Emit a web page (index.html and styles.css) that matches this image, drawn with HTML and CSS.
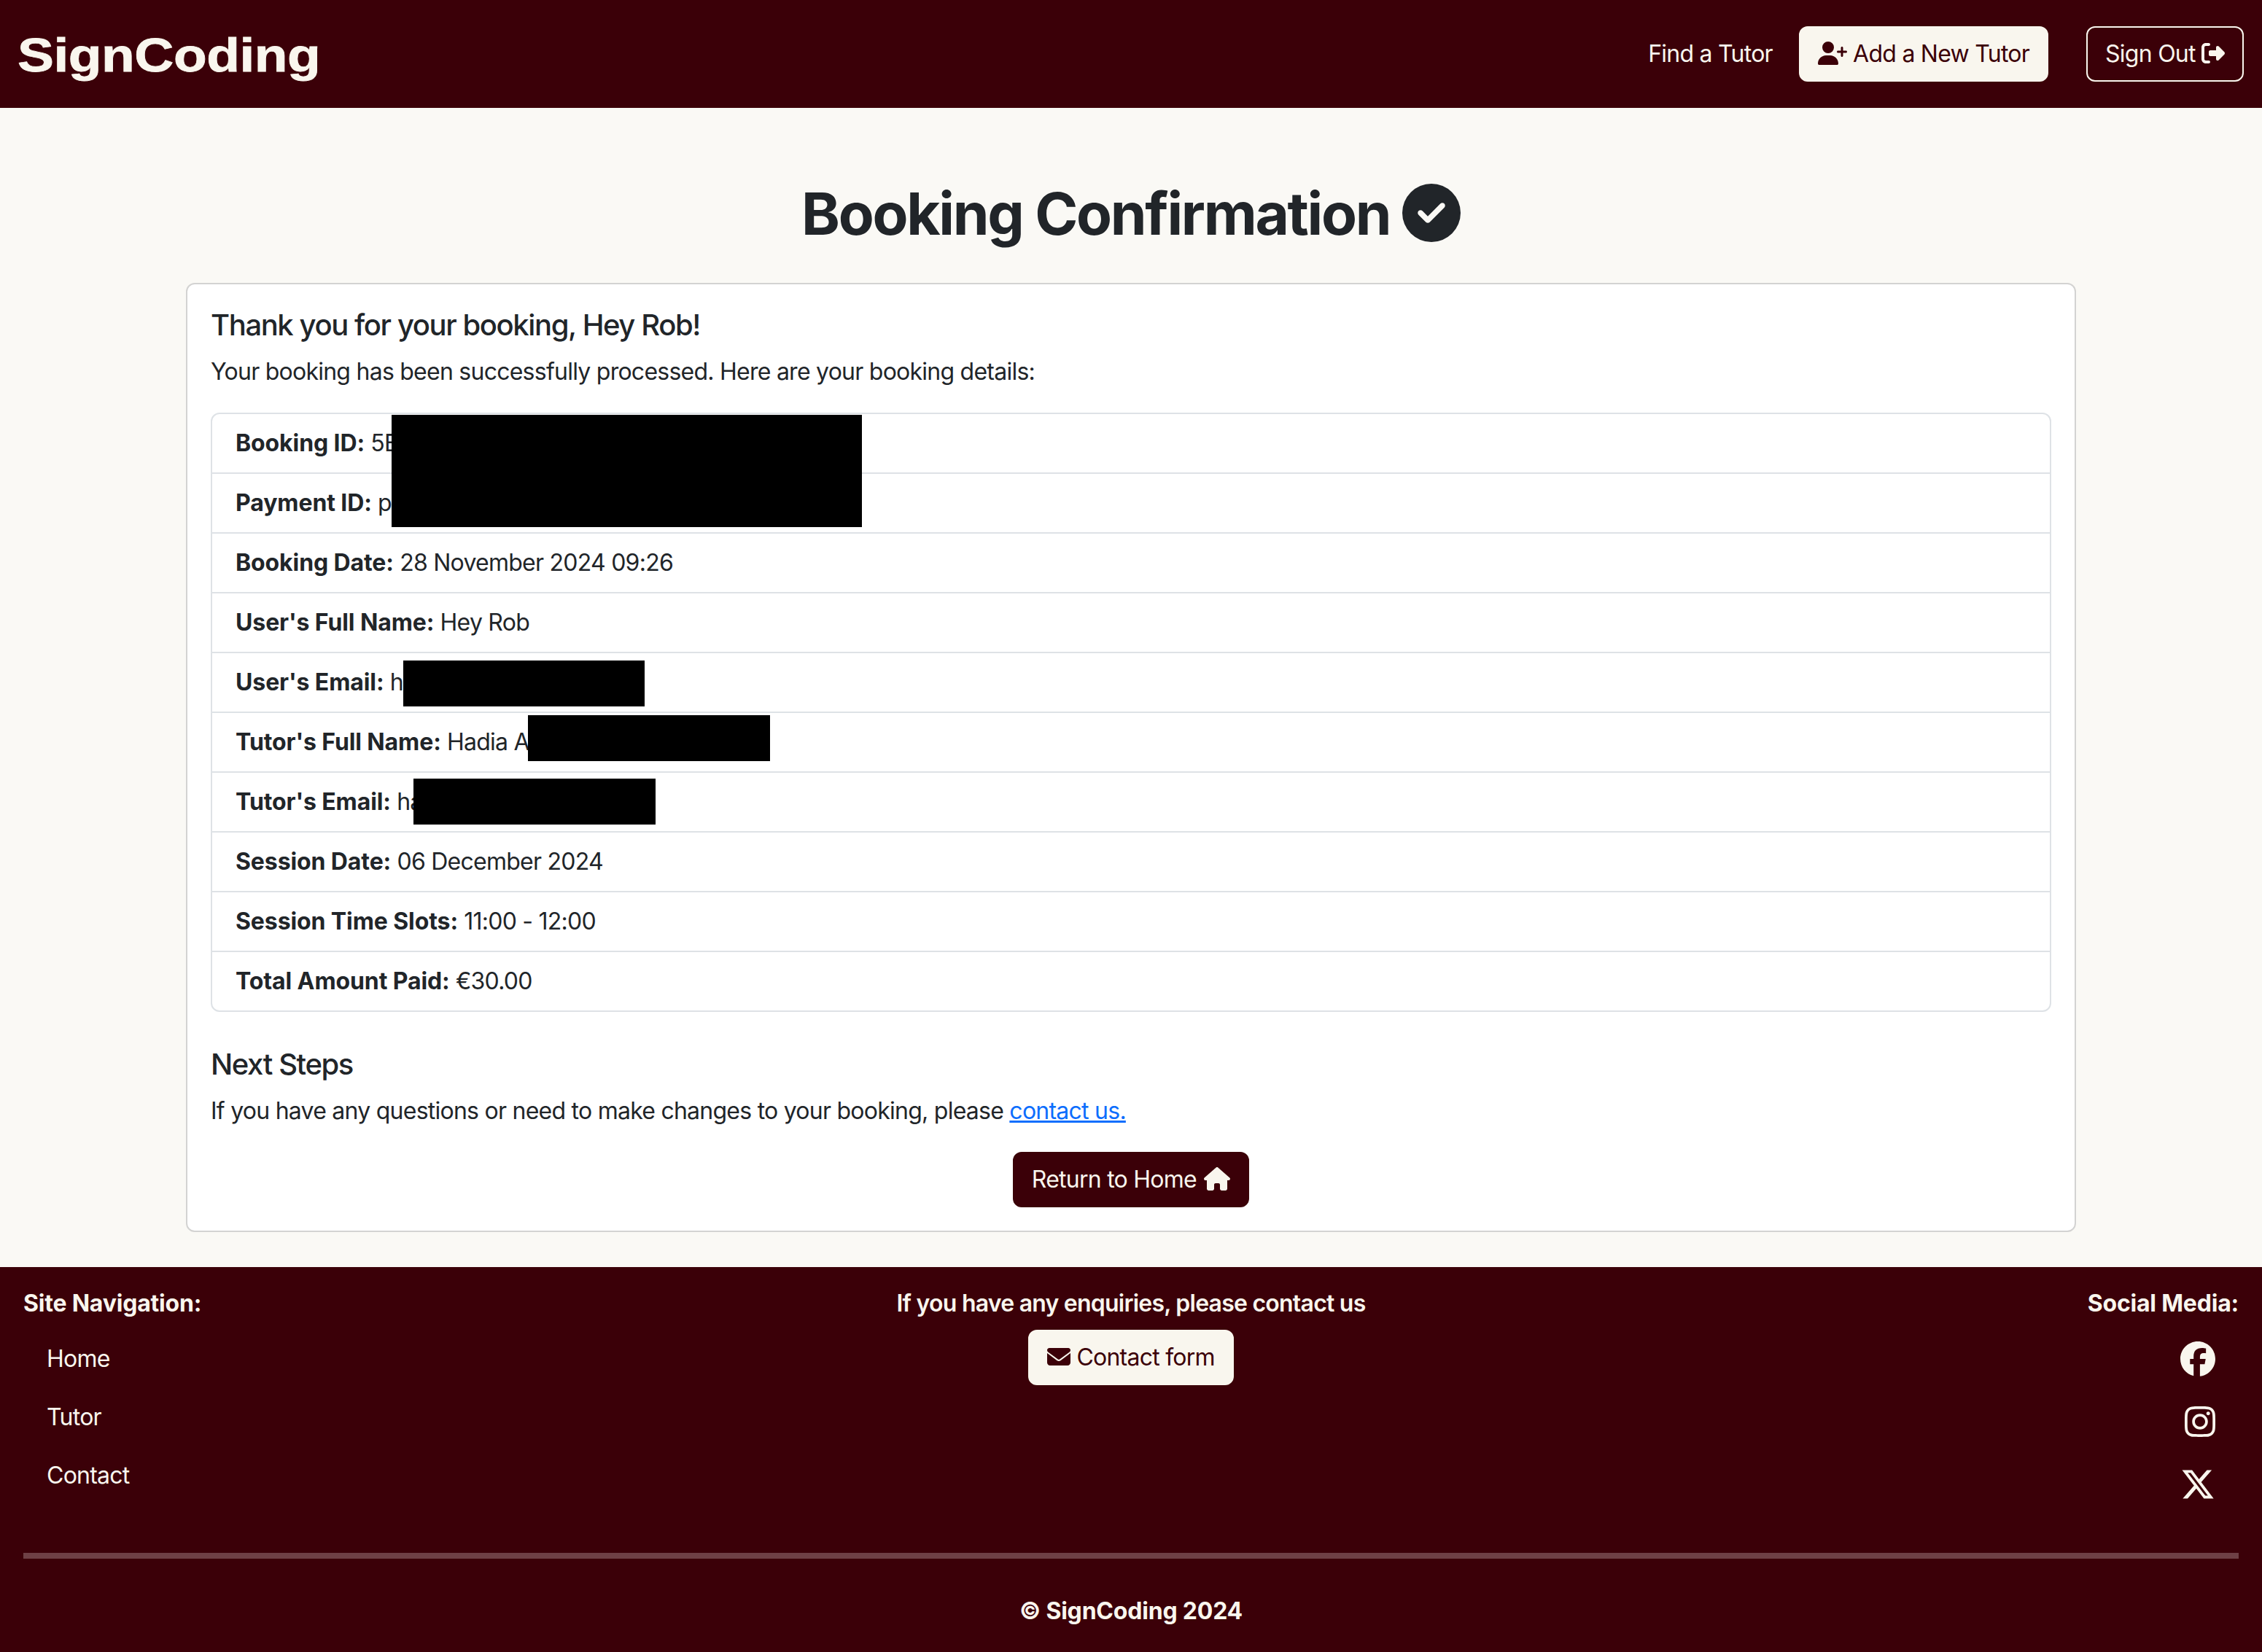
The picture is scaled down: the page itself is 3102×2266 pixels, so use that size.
FILE: index.html
```html
<!DOCTYPE html>
<html lang="en">
<head>
<meta charset="utf-8">
<title>Booking Confirmation</title>
<link rel="stylesheet" href="styles.css">
</head>
<body>
<nav class="navbar">
  <a class="logo" href="#">SignCoding</a>
  <div class="nav-items">
    <a class="nav-link" href="#">Find a Tutor</a>
    <a class="btn btn-cream add-btn" href="#"><svg class="icon" viewBox="0 0 640 512"><path d="M96 128a128 128 0 1 1 256 0A128 128 0 1 1 96 128zM0 482.3C0 383.8 79.8 304 178.3 304h91.4C368.2 304 448 383.8 448 482.3c0 16.4-13.3 29.7-29.7 29.7H29.7C13.3 512 0 498.7 0 482.3zM504 312V248H440c-13.3 0-24-10.7-24-24s10.7-24 24-24h64V136c0-13.3 10.7-24 24-24s24 10.7 24 24v64h64c13.3 0 24 10.7 24 24s-10.7 24-24 24H552v64c0 13.3-10.7 24-24 24s-24-10.7-24-24z"/></svg> Add a New Tutor</a>
    <a class="btn btn-outline" href="#">Sign Out <svg class="icon" viewBox="0 0 512 512"><path d="M377.9 105.9L500.7 228.7c7.2 7.2 11.3 17.1 11.3 27.3s-4.1 20.1-11.3 27.3L377.9 406.1c-6.4 6.4-15 9.9-24 9.9c-18.7 0-33.9-15.2-33.9-33.9l0-62.1-128 0c-17.7 0-32-14.3-32-32l0-64c0-17.7 14.3-32 32-32l128 0 0-62.1c0-18.7 15.2-33.9 33.9-33.9c9 0 17.6 3.6 24 9.9zM160 96L96 96c-17.7 0-32 14.3-32 32l0 256c0 17.7 14.3 32 32 32l64 0c17.7 0 32 14.3 32 32s-14.3 32-32 32l-64 0c-53 0-96-43-96-96L0 128C0 75 43 32 96 32l64 0c17.7 0 32 14.3 32 32s-14.3 32-32 32z"/></svg></a>
  </div>
</nav>

<main class="container">
  <h1 class="title">Booking Confirmation <svg class="icon" viewBox="0 0 512 512"><path d="M256 512A256 256 0 1 0 256 0a256 256 0 1 0 0 512zM369 209L241 337c-9.4 9.4-24.6 9.4-33.9 0l-64-64c-9.4-9.4-9.4-24.6 0-33.9s24.6-9.4 33.9 0l47 47L335 175c9.4-9.4 24.6-9.4 33.9 0s9.4 24.6 0 33.9z"/></svg></h1>
  <section class="card">
    <h5 class="card-title">Thank you for your booking, Hey Rob!</h5>
    <p class="intro">Your booking has been successfully processed. Here are your booking details:</p>
    <div class="list-wrap">
      <ul class="list">
        <li><strong>Booking ID:</strong> 5E</li>
        <li><strong>Payment ID:</strong> p</li>
        <li><strong>Booking Date:</strong> 28 November 2024 09:26</li>
        <li><strong>User's Full Name:</strong> Hey Rob</li>
        <li><strong>User's Email:</strong> h</li>
        <li><strong>Tutor's Full Name:</strong> Hadia A</li>
        <li><strong>Tutor's Email:</strong> ha</li>
        <li><strong>Session Date:</strong> 06 December 2024</li>
        <li><strong>Session Time Slots:</strong> 11:00 - 12:00</li>
        <li><strong>Total Amount Paid:</strong> €30.00</li>
      </ul>
      <div class="redact redact-ids"></div>
      <div class="redact redact-user"></div>
      <div class="redact redact-tutor"></div>
      <div class="redact redact-tutor-email"></div>
    </div>
    <h5 class="next-title">Next Steps</h5>
    <p class="next-text">If you have any questions or need to make changes to your booking, please <a class="link" href="#">contact us.</a></p>
    <div class="center">
      <a class="btn btn-dark" href="#">Return to Home <svg class="icon" viewBox="0 0 576 512"><path d="M575.8 255.5c0 18-15 32.1-32 32.1h-32l.7 160.2c0 2.7-.2 5.4-.5 8.1V472c0 22.1-17.9 40-40 40H456c-1.1 0-2.2 0-3.3-.1c-1.4 .1-2.8 .1-4.2 .1H416 392c-22.1 0-40-17.9-40-40V448 384c0-17.7-14.3-32-32-32H256c-17.7 0-32 14.3-32 32v64 24c0 22.1-17.9 40-40 40H160 128.1c-1.5 0-3-.1-4.5-.2c-1.2 .1-2.4 .2-3.6 .2H104c-22.1 0-40-17.9-40-40V360c0-.9 0-1.9 .1-2.8V287.6H32c-18 0-32-14-32-32.1c0-9 3-17 10-24L266.4 8c7-7 15-8 22-8s15 2 21 7L564.8 231.5c8 7 12 15 11 24z"/></svg></a>
    </div>
  </section>
</main>

<footer class="footer">
  <div class="footer-cols">
    <div class="footer-col">
      <p class="footer-head">Site Navigation:</p>
      <ul class="footer-nav">
        <li><a href="#">Home</a></li>
        <li><a href="#">Tutor</a></li>
        <li><a href="#">Contact</a></li>
      </ul>
    </div>
    <div class="footer-col footer-mid">
      <p class="footer-head footer-head-mid">If you have any enquiries, please contact us</p>
      <a class="btn btn-cream" href="#"><svg class="icon" viewBox="0 0 512 512"><path d="M48 64C21.5 64 0 85.5 0 112c0 15.1 7.1 29.3 19.2 38.4L236.8 313.6c11.4 8.5 27 8.5 38.4 0L492.8 150.4c12.1-9.1 19.2-23.3 19.2-38.4c0-26.5-21.5-48-48-48H48zM0 176V384c0 35.3 28.7 64 64 64H448c35.3 0 64-28.7 64-64V176L294.4 339.2c-22.8 17.1-53.9 17.1-76.8 0L0 176z"/></svg> Contact form</a>
    </div>
    <div class="footer-col footer-right">
      <p class="footer-head">Social Media:</p>
      <ul class="social">
        <li><a href="#" aria-label="Facebook"><svg class="social-icon" viewBox="0 0 512 512"><path d="M512 256C512 114.6 397.4 0 256 0S0 114.6 0 256C0 376 82.7 476.8 194.2 504.5V334.2H141.4V256h52.8V222.3c0-87.1 39.4-127.5 125-127.5c16.2 0 44.2 3.2 55.7 6.4V172c-6-.6-16.5-1-29.6-1c-42 0-58.2 15.9-58.2 57.2V256h83.6l-14.4 78.2H287V510.1C413.8 494.8 512 386.9 512 256h0z"/></svg></a></li>
        <li><a href="#" aria-label="Instagram"><svg class="social-icon" viewBox="0 0 448 512"><path d="M224.1 141c-63.6 0-114.9 51.3-114.9 114.9s51.3 114.9 114.9 114.9S339 319.5 339 255.9 287.7 141 224.1 141zm0 189.6c-41.1 0-74.7-33.5-74.7-74.7s33.5-74.7 74.7-74.7 74.7 33.5 74.7 74.7-33.6 74.7-74.7 74.7zm146.4-194.3c0 14.9-12 26.8-26.8 26.8-14.9 0-26.8-12-26.8-26.8s12-26.8 26.8-26.8 26.8 12 26.8 26.8zm76.1 27.2c-1.7-35.9-9.9-67.7-36.2-93.9-26.2-26.2-58-34.4-93.9-36.2-37-2.1-147.9-2.1-184.9 0-35.8 1.7-67.6 9.9-93.9 36.1s-34.4 58-36.2 93.9c-2.1 37-2.1 147.9 0 184.9 1.7 35.9 9.9 67.7 36.2 93.9s58 34.4 93.9 36.2c37 2.1 147.9 2.1 184.9 0 35.9-1.7 67.7-9.9 93.9-36.2 26.2-26.2 34.4-58 36.2-93.9 2.1-37 2.1-147.8 0-184.8zM398.8 388c-7.8 19.6-22.9 34.7-42.6 42.6-29.5 11.7-99.5 9-132.1 9s-102.7 2.6-132.1-9c-19.6-7.8-34.7-22.9-42.6-42.6-11.7-29.5-9-99.5-9-132.1s-2.6-102.7 9-132.1c7.8-19.6 22.9-34.7 42.6-42.6 29.5-11.7 99.5-9 132.1-9s102.7-2.6 132.1 9c19.6 7.8 34.7 22.9 42.6 42.6 11.7 29.5 9 99.5 9 132.1s2.7 102.7-9 132.1z"/></svg></a></li>
        <li><a href="#" aria-label="X"><svg class="social-icon" viewBox="0 0 512 512"><path d="M389.2 48h70.6L305.6 224.2 487 464H345L233.7 318.6 106.5 464H35.8L200.7 275.5 26.8 48H172.4L272.9 180.9 389.2 48zM364.4 421.8h39.1L151.1 88h-42L364.4 421.8z"/></svg></a></li>
      </ul>
    </div>
  </div>
  <hr class="footer-rule">
  <p class="copyright">© SignCoding 2024</p>
</footer>
</body>
</html>
```
FILE: styles.css
```css
* { box-sizing: border-box; }
html, body { margin: 0; padding: 0; }
body {
  background: #faf9f5;
  color: #212529;
  font-family: Inter, "Liberation Sans", sans-serif;
  font-size: 32px;
  line-height: 48px;
  letter-spacing: -0.75px;
}
a { text-decoration: none; }
ul { list-style: none; margin: 0; padding: 0; }
p { margin: 0; }
.icon { height: 1em; width: auto; fill: currentColor; vertical-align: -0.125em; }

/* Navbar */
.navbar {
  height: 148px;
  background: #3b0008;
  display: flex;
  align-items: center;
  justify-content: space-between;
  padding: 0 25px 0 24px;
}
.logo {
  font-family: "Liberation Sans", Arial, sans-serif;
  font-weight: 700;
  font-size: 64px;
  line-height: 1;
  letter-spacing: -0.4px;
  color: #f9f6ee;
  display: inline-block;
  margin-top: 4px;
  transform: scaleX(1.17);
  transform-origin: left center;
  -webkit-text-stroke: 0.8px #f9f6ee;
}
.nav-items { display: flex; align-items: center; }
.nav-link { color: #f9f6ee; margin-right: 36px; }
.btn {
  display: inline-block;
  height: 76px;
  padding: 12px 24px;
  border: 2px solid transparent;
  border-radius: 12px;
  white-space: nowrap;
}
.btn-cream { background: #f9f6ee; color: #3b0008; border-color: #f9f6ee; }
.add-btn { margin-right: 52px; }
.btn-outline { color: #f9f6ee; border-color: #f9f6ee; }
.btn-dark { background: #3b0008; color: #f9f6ee; border-color: #3b0008; }
.btn-dark .icon { margin-left: 2px; }

/* Main */
.container {
  max-width: 2640px;
  margin: 0 auto;
  padding: 96px 24px 48px;
}
.title {
  margin: 0 0 47px;
  padding-top: 1px;
  font-size: 80px;
  line-height: 96px;
  font-weight: 700;
  letter-spacing: -2.3px;
  text-align: center;
}
.card {
  background: #fff;
  border: 2px solid #d3d3d2;
  border-radius: 12px;
  padding: 32px;
}
.card-title, .next-title {
  margin: 0 0 16px;
  font-size: 40px;
  line-height: 48px;
  font-weight: 500;
  letter-spacing: -1.4px;
}
.intro { margin-bottom: 32px; }
.list-wrap { position: relative; margin-bottom: 48px; }
.list { background: #fff; border: 2px solid #dee2e6; border-radius: 12px; }
.list li { padding: 16px 32px; border-bottom: 2px solid #dee2e6; }
.list li:last-child { border-bottom: 0; }
.list strong { font-weight: 700; letter-spacing: -0.1px; }
.redact { position: absolute; background: #000; }
.redact-ids { left: 248px; top: 3px; width: 645px; height: 154px; }
.redact-user { left: 264px; top: 340px; width: 331px; height: 63px; }
.redact-tutor { left: 435px; top: 415px; width: 332px; height: 63px; }
.redact-tutor-email { left: 278px; top: 502px; width: 332px; height: 63px; }
.next-text { margin-bottom: 32px; }
.link { color: #0d6efd; text-decoration: underline; }
.center { display: flex; justify-content: center; }

/* Footer */
.footer {
  background: #3b0008;
  color: #f9f6ee;
  padding: 26px 32px 0;
  height: 528px;
}
.footer a { color: inherit; }
.footer .btn-cream { color: #3b0008; }
.footer-cols {
  display: grid;
  grid-template-columns: 1fr auto 1fr;
  height: 366px;
}
.footer-head { font-weight: 700; letter-spacing: -0.2px; margin-bottom: 12px; }
.footer-head-mid { font-weight: 600; letter-spacing: -0.77px; }
.footer-nav li { padding: 16px 32px; }
.footer-mid { display: flex; flex-direction: column; align-items: center; }
.footer-right { text-align: right; }
.social { display: flex; flex-direction: column; align-items: flex-end; gap: 38px; padding: 16px 32px 0 0; }
.social li { height: 48px; }
.social a { display: block; height: 48px; }
.social-icon { display: block; height: 48px; width: auto; fill: currentColor; }
.footer-rule { height: 8px; border: 0; margin: 0; background: #6e4045; }
.copyright { margin-top: 48px; text-align: center; font-weight: 700; letter-spacing: -0.2px; }
```
